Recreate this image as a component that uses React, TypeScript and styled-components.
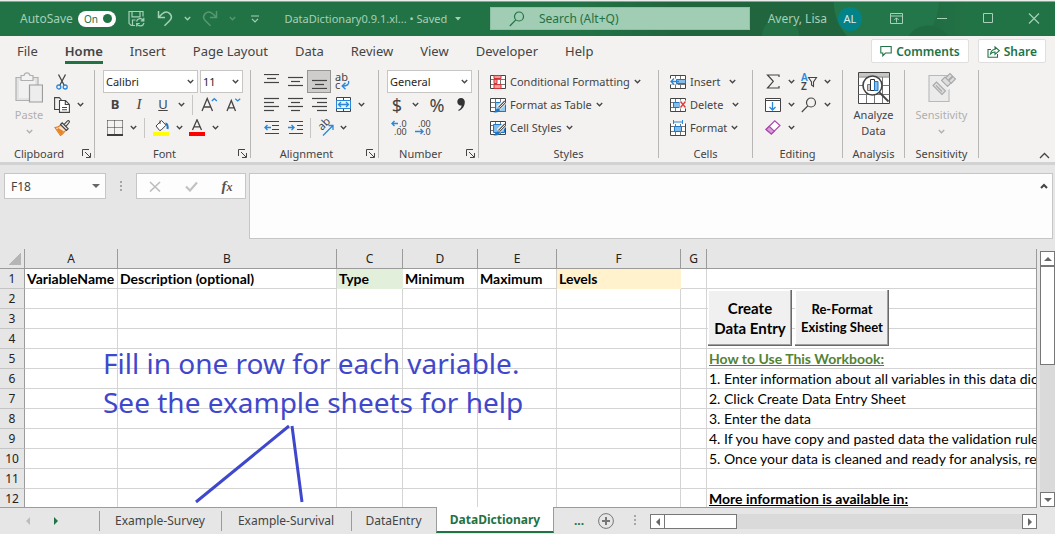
import React from "react";
import styled, { createGlobalStyle, css } from "styled-components";

const UI = `"Noto Sans", "Open Sans", sans-serif`;
const CELL = `Lato, "Open Sans", sans-serif`;
const GREEN = "#217346";
const INK = "#444444";
const BLUE = "#2b88d8";

const GlobalStyle = createGlobalStyle`
  * { box-sizing: border-box; }
  body { margin: 0; background: #e6e6e6; font-family: ${UI}; font-size: 12px; color: ${INK}; }
  button, input, select, textarea { font: inherit; color: inherit; margin: 0; }
`;

const Window = styled.div`
  display: flex;
  flex-direction: column;
  height: 100vh;
  overflow: hidden;
`;

const bare = css`
  border: 0;
  padding: 0;
  background: transparent;
  display: flex;
  align-items: center;
  justify-content: center;
  white-space: nowrap;
`;

/* ---------- title bar ---------- */

const TitleBar = styled.header`
  display: flex;
  align-items: center;
  flex: none;
  height: 36px;
  padding: 0 14px 0 20px;
  border-top: 1px solid #ececec;
  box-shadow: inset 0 1px #9b9b9b;
  background:
    radial-gradient(circle at 88% 140%, #1f6a40 0 24px, transparent 25px),
    radial-gradient(circle at 84% 0, #22764a 0 52px, transparent 53px),
    radial-gradient(circle at 74% 100%, #227245 0 18px, transparent 19px),
    linear-gradient(90deg, ${GREEN} 0 55%, #21653f 64% 84%, ${GREEN} 92%);
  color: #a6d0b7;
`;

const AutoSave = styled.label`
  display: flex;
  align-items: center;
  gap: 5px;
  flex: none;
  white-space: nowrap;
`;

const Pill = styled.span`
  display: flex;
  align-items: center;
  justify-content: space-between;
  flex: none;
  width: 38px;
  height: 16px;
  padding: 0 4px 0 6px;
  border-radius: 8px;
  background: #fff;
  color: ${GREEN};
  font-size: 10px;
`;

const PillDot = styled.input`
  appearance: none;
  width: 9px;
  height: 9px;
  border-radius: 50%;
  background: ${GREEN};
`;

const QuickTools = styled.div`
  display: flex;
  align-items: center;
  flex: none;
  margin-left: 9px;
`;

const QuickButton = styled.button<{ $w: number; $dim?: boolean }>`
  ${bare}
  width: ${(p) => p.$w}px;
  height: 24px;
  opacity: ${(p) => (p.$dim ? 0.4 : 1)};
`;

const DocTitle = styled.button`
  ${bare}
  flex: none;
  gap: 8px;
  min-width: 182px;
  margin: 0 26px 0 10px;
  font-size: 11px;
`;

const SearchBox = styled.label`
  display: flex;
  align-items: center;
  flex: 0 1 260px;
  gap: 14px;
  height: 23px;
  padding-left: 18px;
  border: 1px solid #8cc2a3;
  background: #a0cdb3;
  color: ${GREEN};
`;

const SearchInput = styled.input`
  flex: 1;
  min-width: 0;
  border: 0;
  padding: 0;
  outline: 0;
  background: transparent;
  &::placeholder { color: ${GREEN}; opacity: 1; }
`;

const Account = styled.button`
  ${bare}
  gap: 11px;
  margin-left: auto;
`;

const Avatar = styled.span`
  display: grid;
  place-items: center;
  width: 24px;
  height: 24px;
  border-radius: 50%;
  background: #038387;
  color: #d7eeee;
  font-size: 11px;
`;

const WindowButtons = styled.div`
  display: flex;
  gap: 32px;
  margin-left: 27px;
`;

/* ---------- ribbon tabs ---------- */

const TabRow = styled.nav`
  display: flex;
  align-items: center;
  flex: none;
  height: 30px;
  padding: 0 9px 0 17px;
  background: #f3f2f1;
`;

const TabList = styled.div`
  display: flex;
  gap: 27px;
  flex: 1;
`;

const RibbonTab = styled.button<{ $active?: boolean }>`
  ${bare}
  position: relative;
  height: 30px;
  font-size: 13px;
  ${(p) =>
    p.$active &&
    css`
      font-weight: 600;
      &::after {
        content: "";
        position: absolute;
        left: 0;
        right: 0;
        bottom: 2px;
        height: 3px;
        background: ${GREEN};
      }
    `}
`;

const ActionButton = styled.button`
  ${bare}
  gap: 4px;
  height: 24px;
  margin-left: 9px;
  padding: 0 8px;
  border: 1px solid #e1dfdd;
  border-radius: 2px;
  background: #fff;
  color: ${GREEN};
  font-weight: 600;
  font-size: 12px;
`;

/* ---------- ribbon ---------- */

const Ribbon = styled.section`
  display: flex;
  flex: none;
  height: 99px;
  padding-top: 4px;
  background: #f3f2f1;
  border-bottom: 3px solid #d2d2d2;
  font-size: 11px;
`;

const Group = styled.div<{ $w: number }>`
  display: flex;
  flex-direction: column;
  flex: none;
  width: ${(p) => p.$w}px;
  height: 88px;
  border-right: 1px solid #b9b7b5;
`;

const GroupBody = styled.div`
  display: flex;
  height: 78px;
  padding: 0 8px;
`;

const GroupFooter = styled.div`
  display: flex;
  align-items: center;
  height: 10px;
`;

const GroupName = styled.span<{ $launcher?: boolean }>`
  flex: 1;
  text-align: center;
  padding-right: ${(p) => (p.$launcher ? 4 : 0)}px;
  white-space: nowrap;
`;

const Stack = styled.div`
  display: flex;
  flex-direction: column;
`;

const Row = styled.div`
  display: flex;
  align-items: center;
  height: 23px;
`;

const Tool = styled.button<{ $w?: number; $on?: boolean }>`
  ${bare}
  flex: none;
  width: ${(p) => p.$w ?? 24}px;
  height: 23px;
  ${(p) => p.$on && css`background: #cfcdcb; border: 1px solid #979593;`}
`;

const LauncherButton = styled.button`
  ${bare}
  flex: none;
  width: 9px;
  height: 10px;
  margin-right: 3px;
`;

const Divider = styled.span<{ $w?: number }>`
  width: ${(p) => p.$w ?? 10}px;
  height: 20px;
  background: linear-gradient(#c8c6c4, #c8c6c4) center / 1px 100% no-repeat;
`;

const Command = styled.button`
  ${bare}
  justify-content: flex-start;
  gap: 4px;
  height: 23px;
  padding-left: 3px;
`;

const BigTool = styled.button<{ $dim?: boolean }>`
  ${bare}
  flex-direction: column;
  justify-content: flex-start;
  flex: 1;
  padding-top: 2px;
  line-height: 16px;
  color: ${(p) => (p.$dim ? "#b1afad" : INK)};
`;

const BigIcon = styled.span`
  display: grid;
  place-items: start center;
  height: 35px;
`;

const BigChevron = styled.span`
  display: grid;
  place-items: center;
  height: 16px;
`;

const SelectWrap = styled.label<{ $w: number }>`
  display: flex;
  align-items: center;
  width: ${(p) => p.$w}px;
  height: 23px;
  margin-right: 2px;
  padding-right: 3px;
  border: 1px solid #c8c6c4;
  background: #fff;
`;

const Select = styled.select`
  appearance: none;
  flex: 1;
  min-width: 0;
  height: 21px;
  border: 0;
  padding: 0 0 0 2px;
  outline: 0;
  background: transparent;
  color: #262626;
`;

const Letter = styled.span<{ $size?: number; $bold?: boolean }>`
  font-size: ${(p) => p.$size ?? 13}px;
  font-weight: ${(p) => (p.$bold ? 700 : 400)};
  line-height: 1;
`;

const ItalicLetter = styled(Letter)`
  font-family: "Liberation Serif", serif;
  font-style: italic;
`;

const CollapseSlot = styled.div`
  display: flex;
  flex: 1;
  align-items: flex-end;
  justify-content: flex-end;
  padding-right: 5px;
`;

const CollapseButton = styled.button`
  ${bare}
  width: 12px;
  height: 14px;
`;

/* ---------- formula bar ---------- */

const FormulaRow = styled.section`
  display: flex;
  align-items: flex-start;
  flex: none;
  height: 84px;
  padding: 8px 2px 0 4px;
  background: #e6e6e6;
`;

const NameBox = styled.div`
  display: flex;
  align-items: center;
  width: 102px;
  height: 26px;
  padding: 0 5px 0 6px;
  border: 1px solid #c6c6c6;
  background: #fdfdfd;
`;

const NameInput = styled.input`
  flex: 1;
  min-width: 0;
  border: 0;
  padding: 0;
  outline: 0;
  background: transparent;
`;

const Dots = styled.span`
  display: grid;
  place-items: center;
  width: 30px;
  height: 26px;
`;

const FormulaTools = styled.div`
  display: flex;
  width: 110px;
  height: 26px;
  border: 1px solid #c6c6c6;
  background: #fdfdfd;
`;

const FormulaTool = styled.button`
  ${bare}
  flex: 1;
`;

const FormulaField = styled.div`
  display: flex;
  align-items: flex-start;
  flex: 1;
  height: 66px;
  margin-left: 3px;
  padding: 0 3px;
  border: 1px solid #c6c6c6;
  background: #fdfdfd;
`;

const FormulaInput = styled.textarea`
  flex: 1;
  height: 64px;
  border: 0;
  outline: 0;
  resize: none;
  background: transparent;
`;

/* ---------- worksheet ---------- */

const SheetArea = styled.main`
  display: flex;
  flex: 1;
  min-height: 0;
  gap: 3px;
`;

const Sheet = styled.div`
  position: relative;
  flex: 1;
  min-width: 0;
  overflow: hidden;
  background: #fff;
  border-right: 1px solid #9b9b9b;
`;

const Grid = styled.table`
  width: 100%;
  table-layout: fixed;
  border-collapse: separate;
  border-spacing: 0;
  font-family: ${CELL};
  font-size: 14px;
  font-variant-ligatures: none;
  color: #000;
`;

const ColHead = styled.th`
  height: 20px;
  padding: 0;
  border-right: 1px solid #9b9b9b;
  border-bottom: 1px solid #9b9b9b;
  background: #e6e6e6;
  font: 12px/18px ${UI};
  color: #222;
  &:last-child { border-right: 0; }
`;

const Corner = styled(ColHead)`
  background: linear-gradient(135deg, #e6e6e6 50%, #b5b5b5 50%) 9px 4px / 12px 12px no-repeat, #e6e6e6;
`;

const RowHead = styled.th`
  height: 20px;
  padding: 0;
  border-right: 1px solid #9b9b9b;
  border-bottom: 1px solid #c4c4c4;
  background: #e6e6e6;
  font: 12px/18px ${UI};
  color: #222;
`;

const Cell = styled.td<{ $fill?: string; $bold?: boolean }>`
  height: 20px;
  padding: 0 0 0 2px;
  overflow: hidden;
  white-space: nowrap;
  line-height: 19px;
  border-right: 1px solid ${(p) => p.$fill ?? "#d4d4d4"};
  border-bottom: 1px solid ${(p) => p.$fill ?? "#d4d4d4"};
  background: ${(p) => p.$fill ?? "#fff"};
  font-weight: ${(p) => (p.$bold ? 700 : 400)};
  &:last-child { border-right: 0; }
`;

const Heading = styled.span<{ $color: string }>`
  color: ${(p) => p.$color};
  font-weight: 700;
  text-decoration: underline;
`;

const MacroButton = styled.button<{ $x: number; $w: number; $size: number }>`
  position: absolute;
  left: ${(p) => p.$x}px;
  top: 41px;
  width: ${(p) => p.$w}px;
  height: 56px;
  padding: 0;
  border: 0;
  background: #f0f0f0;
  box-shadow: inset -1px -1px #696969, inset -2px -2px #a0a0a0, inset 1px 1px #fff;
  font-family: ${CELL};
  font-variant-ligatures: none;
  font-weight: 700;
  font-size: ${(p) => p.$size}px;
  line-height: ${(p) => p.$size + 5}px;
  color: #000;
  white-space: pre;
`;

const Note = styled.p`
  position: absolute;
  left: 103px;
  top: 95px;
  margin: 0;
  color: #3f48cc;
  font-size: 28px;
  line-height: 39px;
  white-space: nowrap;
  pointer-events: none;
`;

const NoteLines = styled.svg`
  position: absolute;
  left: 190px;
  top: 174px;
  pointer-events: none;
`;

/* ---------- scroll bars and sheet tabs ---------- */

const VScroll = styled.div`
  display: flex;
  flex-direction: column;
  width: 15px;
  padding-top: 2px;
`;

const ScrollButton = styled.button`
  ${bare}
  flex: none;
  width: 15px;
  height: 15px;
  border: 1px solid #777;
  background: #fff;
`;

const VTrack = styled.div`
  flex: 1;
  background: #dadada;
`;

const VThumb = styled.div`
  height: 99px;
  border: 1px solid #777;
  background: #fff;
`;

const BottomBar = styled.footer`
  display: flex;
  align-items: flex-start;
  flex: none;
  height: 27px;
  padding-right: 18px;
  background: linear-gradient(#9b9b9b, #9b9b9b) 0 0 / calc(100% - 18px) 1px no-repeat, #e6e6e6;
`;

const SheetNav = styled.div`
  display: flex;
  align-items: center;
  gap: 16px;
  width: 99px;
  height: 27px;
  padding-left: 22px;
`;

const NavButton = styled.button`
  ${bare}
  width: 12px;
  height: 16px;
`;

const SheetTab = styled.button<{ $w: number; $active?: boolean }>`
  ${bare}
  width: ${(p) => p.$w}px;
  height: 26px;
  background: linear-gradient(#9b9b9b, #9b9b9b) 0 4px / 1px 20px no-repeat;
  ${(p) =>
    p.$active &&
    css`
      border: 1px solid #9b9b9b;
      border-top: 0;
      border-bottom: 2px solid ${GREEN};
      background: #fff;
      color: ${GREEN};
      font-weight: 700;
    `}
`;

const MoreTabs = styled.button`
  ${bare}
  width: 44px;
  height: 26px;
  padding-left: 6px;
  color: ${GREEN};
  font-weight: 700;
`;

const AddSheet = styled.button`
  ${bare}
  height: 28px;
  margin-right: 6px;
`;

const HScroll = styled.div`
  display: flex;
  flex: 1;
  margin-top: 7px;
`;

const HTrack = styled.div`
  flex: 1;
  height: 15px;
  background: #dadada;
`;

const HThumb = styled.div`
  width: 72px;
  height: 15px;
  border: 1px solid #777;
  border-left: 0;
  background: #fff;
`;

/* ---------- drawings ---------- */

type IconProps = { w?: number; h?: number; children: React.ReactNode; sw?: number };

const Icon = ({ w = 16, h = 16, sw = 1, children }: IconProps) => (
  <svg width={w} height={h} viewBox={`0 0 ${w} ${h}`} fill="none" stroke="currentColor" strokeWidth={sw} aria-hidden="true">
    {children}
  </svg>
);

const TextIcon = styled.svg`
  overflow: visible;
  font-family: ${UI};
  fill: ${INK};
`;

const Chevron = ({ up }: { up?: boolean }) => (
  <Icon w={7} h={5} sw={1.3}>
    <path d={up ? "M.8 4 3.5 1.2 6.2 4" : "M.8 1 3.5 3.8 6.2 1"} />
  </Icon>
);

const Drop = ({ label, w = 12 }: { label: string; w?: number }) => (
  <Tool $w={w} aria-label={label}>
    <Chevron />
  </Tool>
);

const Triangle = ({ dir, color = "#666" }: { dir: "up" | "down" | "left" | "right"; color?: string }) => {
  const d = { up: "M0 6 4 2 8 6z", down: "M0 2 4 6 8 2z", left: "M6 0 2 4 6 8z", right: "M2 0 6 4 2 8z" }[dir];
  return (
    <svg width="8" height="8" viewBox="0 0 8 8" aria-hidden="true">
      <path d={d} fill={color} />
    </svg>
  );
};

const SmallTriangle = ({ color }: { color: string }) => (
  <svg width="6" height="4" viewBox="0 0 6 4" aria-hidden="true">
    <path d="M0 0h6L3 3.500z" fill={color} />
  </svg>
);

const Launcher = () => (
  <LauncherButton aria-label="More settings">
    <Icon w={9} h={9}>
      <path d="M.5 7V.5H7M3 3l5 5M8.500 4v4.500H4" />
    </Icon>
  </LauncherButton>
);

const AlignLines = ({ rows }: { rows: [number, number, number][] }) => (
  <Icon w={15} h={15} sw={1.2}>
    {rows.map(([x, y, w]) => (
      <path key={y} d={`M${x} ${y + 0.5}h${w}`} />
    ))}
  </Icon>
);

const TableGlyph = ({ children }: { children?: React.ReactNode }) => (
  <Icon>
    <path d="M.5 1.500h15v13H.5z" fill="#fff" stroke="#444" />
    <path d="M1 5.500h14M1 10.500h14M5.500 2v12M10.500 2v12" stroke="#777" />
    {children}
  </Icon>
);

const Brush = () => (
  <>
    <path d="M15 4.500 8.500 11" stroke="#f3f2f1" strokeWidth="5" />
    <path d="M15.300 4.500 9 11" stroke="#555" strokeWidth="2.600" />
    <path d="M15 5 9.300 10.700" stroke="#fff" strokeWidth=".9" />
    <path d="M3 15.500c3 0 2-4 5-4 2 0 2.300 2 1 3-1.500 1.200-4 1.200-6 1z" fill="#1f77c4" stroke="none" />
  </>
);

const I = {
  save: (
    <Icon w={17} h={17} sw={1.2}>
      <path d="M7 15.500H3.200L1 13.300V1.500h14v5M4 1.500v5.300h8V1.500M4.500 15v-5h3" />
      <path d="M8.500 11.500a3.800 3.800 0 0 1 7-1M15.800 7.800v3h-3M16 13a3.800 3.800 0 0 1-7 1M8.700 16.500v-3h3" />
    </Icon>
  ),
  undo: (
    <Icon w={16} h={17} sw={1.5}>
      <path d="M1.500 1v6.500H8M1.500 7.500 5 4c2.500-2.300 5.700-2.400 7.800-.4 2 2 1.900 4.800 0 6.800L7.500 15.800" />
    </Icon>
  ),
  redo: (
    <Icon w={16} h={17} sw={1.5}>
      <path d="M14.500 1v6.500H8M14.500 7.500 11 4C8.500 1.700 5.300 1.600 3.200 3.600c-2 2-1.900 4.800 0 6.800l5.300 5.400" />
    </Icon>
  ),
  customise: (
    <Icon w={8} h={8} sw={1.2}>
      <path d="M0 1h8M1 3.800 4 6.800 7 3.800" />
    </Icon>
  ),
  search: (
    <Icon w={16} h={16} sw={1.2}>
      <circle cx="10" cy="5.500" r="4.500" />
      <path d="M6.800 8.800.8 15" />
    </Icon>
  ),
  ribbonMode: (
    <Icon w={13} h={11}>
      <path d="M.5.5h12v10H.5zM.5 3h12M6.500 9.500V5M4.300 7l2.200-2.200L8.700 7" />
    </Icon>
  ),
  minimise: (
    <Icon w={14} h={11}>
      <path d="M2 5.500h10" />
    </Icon>
  ),
  maximise: (
    <Icon w={14} h={11}>
      <path d="M2.500.5h9v9h-9z" />
    </Icon>
  ),
  close: (
    <Icon w={14} h={11} sw={1.200}>
      <path d="m2 .5 10 10M12 .5l-10 10" />
    </Icon>
  ),
  comment: (
    <Icon w={12} h={12} sw={1.1}>
      <path d="M.8 1.500h10.400v6.500H5.500L2.800 10.800V8h-2z" />
    </Icon>
  ),
  share: (
    <Icon w={13} h={13} sw={1.1}>
      <path d="M4 4.500H1v7.800h9.500V9M3.500 9C4 6 5.500 4.500 8 4.500V2l4.300 3.700L8 9.300V7C6 7 4.800 7.600 3.500 9z" />
    </Icon>
  ),
  paste: (
    <Icon w={28} h={32} sw={1.2}>
      <path d="M1 5.500h22v23H1z" fill="#e3e3e3" stroke="#b0b0b0" />
      <path d="M4 8h16v18H4z" fill="#f1f1f1" stroke="none" />
      <path d="M6 8.500v-5h3C9.500 1.500 10.500.8 12 .8s2.500.7 3 2.700h3v5z" fill="#f3f3f3" stroke="#b0b0b0" />
      <path d="M14.500 13h13v17h-13z" fill="#ededed" stroke="#9c9c9c" />
    </Icon>
  ),
  cut: (
    <Icon w={12} h={16} sw={1.300}>
      <path d="M2.500.5 8.300 11.500M9.500.5 3.700 11.500" />
      <circle cx="2.800" cy="13" r="2" stroke={BLUE} />
      <circle cx="9.200" cy="13" r="2" stroke={BLUE} />
    </Icon>
  ),
  copy: (
    <Icon w={16} h={16} sw={1.1}>
      <path d="M5 12.500H.6V.6h4.600l2.200 2.200" />
      <path d="M5.500 3.500h6l3.900 3.900v8H5.500zM11.300 3.500v4h4M8 10.500h5M8 12.800h5" fill="#fff" />
    </Icon>
  ),
  painter: (
    <Icon w={16} h={16} sw={1.1}>
      <path d="M1 7.500c2.500 0 4.500-1 6-2.500l5 5c-1.500 2-3 4-5.500 5.500z" fill="#fbe3cd" stroke="#e07b1f" />
      <path d="M2.500 9.500 7 15l3-3.500L4.500 8z" fill="#e88427" stroke="none" />
      <path d="m6.500 4.500 1.700-1.700 6 6-1.700 1.700zM10 4.600 13.500.9c1-.9 2.500.5 1.600 1.600L12 6.300" fill="#f3f2f1" />
    </Icon>
  ),
  borders: (
    <Icon w={16} h={16}>
      <path d="M.5.500h15M.5 7.500h15M.5.500v13M7.500.5v13M15.500.500v13" strokeDasharray="1 1" stroke="#333" />
      <path d="M0 15h16" stroke="#000" strokeWidth="1.500" />
    </Icon>
  ),
  bucket: (
    <Icon w={16} h={17}>
      <path d="m3 7 5.500-5.500L13 6.200l-5 5-1.500.2z" fill="#fff" />
      <path d="M7 5V1.500" />
      <path d="M12.500 4.500c1.500 0 2.500 2 2 5.500" stroke="#1f77c4" strokeWidth="2" />
      <path d="M0 15h16" stroke="#ff0" strokeWidth="4" />
    </Icon>
  ),
  fontColor: (
    <Icon w={16} h={17} sw={1.3}>
      <path d="M3.500 11 8 .8 12.500 11M5 7.800h6" />
      <path d="M0 15h16" stroke="#f00" strokeWidth="4" />
    </Icon>
  ),
  grow: (
    <Icon w={17} h={16} sw={1.300}>
      <path d="M1 14 6.200 1.500 11.500 14M3 10h6.500" />
      <path d="M10.800 4 13.300 1.700l2.500 2.300" stroke={BLUE} />
    </Icon>
  ),
  shrink: (
    <Icon w={15} h={16} sw={1.300}>
      <path d="M1 14 5.300 3.500 9.500 14M2.500 10.800h5.600" />
      <path d="M9.300 1.800 11.700 4l2.500-2.200" stroke={BLUE} />
    </Icon>
  ),
  wrap: (
    <TextIcon width="16" height="18" viewBox="0 0 16 18" aria-hidden="true">
      <text x="0" y="8" fontSize="11">ab</text>
      <text x="0" y="16" fontSize="11">c</text>
      <path d="M13.500 8c1 3-1 5-6 5M10.500 9.700 7.200 13l3.300 3.200" fill="none" stroke={BLUE} strokeWidth="1.400" />
    </TextIcon>
  ),
  merge: (
    <Icon w={15} h={15}>
      <path d="M.5.500h14v14H.5z" fill="#fff" />
      <path d="M7.500 0v3M7.500 12v3" />
      <path d="M.5 3.500h14v8H.5z" stroke={BLUE} fill="#e8f2fb" />
      <path d="M2.500 7.500h10M5 5 2.500 7.500 5 10M10 5l2.500 2.500L10 10" stroke={BLUE} strokeWidth="1.300" />
    </Icon>
  ),
  outdent: (
    <Icon w={15} h={13}>
      <path d="M1 .5h14M8 4.500h7M8 8.500h7M1 12.500h14" />
      <path d="M7 6.500H1M3.500 4 1 6.500 3.500 9" stroke={BLUE} strokeWidth="1.400" />
    </Icon>
  ),
  indent: (
    <Icon w={15} h={13}>
      <path d="M1 .5h14M9 4.500h6M9 8.500h6M1 12.500h14" />
      <path d="M0 6.500h6M3.500 4 6 6.500 3.500 9" stroke={BLUE} strokeWidth="1.400" />
    </Icon>
  ),
  orient: (
    <TextIcon width="17" height="16" viewBox="0 0 17 16" aria-hidden="true">
      <text transform="translate(5 11) rotate(-45)" fontSize="11">ab</text>
      <path d="M6 15.500 16 5.500M11.500 5.500H16V10" fill="none" stroke={BLUE} strokeWidth="1.300" />
    </TextIcon>
  ),
  moreDecimals: (
    <TextIcon width="17" height="17" viewBox="0 0 17 17" aria-hidden="true">
      <text x="8" y="8" fontSize="9">.0</text>
      <text x="3" y="16" fontSize="9">.00</text>
      <path d="M7 4.500H1M3.500 2 1 4.500 3.500 7" fill="none" stroke={BLUE} strokeWidth="1.400" />
    </TextIcon>
  ),
  fewerDecimals: (
    <TextIcon width="17" height="17" viewBox="0 0 17 17" aria-hidden="true">
      <text x="3" y="8" fontSize="9">.00</text>
      <text x="8" y="16" fontSize="9">.0</text>
      <path d="M0 12.500h8M5.500 10 8 12.500 5.500 15" fill="none" stroke={BLUE} strokeWidth="1.400" />
    </TextIcon>
  ),
  conditional: (
    <TableGlyph>
      <path d="M4 1.500h7v3H4zM4 5.500h3v4H4zM4 10.500h7v4H4z" fill="#f59a9a" stroke="#d13438" />
    </TableGlyph>
  ),
  formatTable: (
    <TableGlyph>
      <path d="M5.500 5.500h10v9h-10z" fill="#9ccbf0" stroke="#1f77c4" />
      <Brush />
    </TableGlyph>
  ),
  cellStyles: (
    <TableGlyph>
      <path d="M3.500 4.500h11v8h-11z" fill="#83bdec" stroke="#1f77c4" />
      <Brush />
    </TableGlyph>
  ),
  insert: (
    <TableGlyph>
      <path d="M0 4.500h8v6H0z" fill="#fff" stroke="none" />
      <path d="M6.500 5.500h9v4h-9z" fill="#83bdec" stroke="#1f77c4" />
      <path d="M9 7.500H1M4 4.500l-3 3 3 3" stroke={BLUE} strokeWidth="1.400" />
    </TableGlyph>
  ),
  remove: (
    <TableGlyph>
      <path d="M3.500 5.500h6v5h-6z" fill="#83bdec" stroke="#1f77c4" />
      <path d="M9.500 3.500H16v8H9.500z" fill="#f3f2f1" stroke="none" />
      <path d="m10.500 4.500 5 6M15.500 4.500l-5 6" stroke="#e03b3b" strokeWidth="1.400" />
    </TableGlyph>
  ),
  format: (
    <Icon w={16} h={16}>
      <path d="M.5 3.500v12h15v-12" fill="#fff" />
      <path d="M1 6.500h14M1 11.500h14M5.500 4v11M10.500 4v11" stroke="#777" />
      <path d="M4.500 6.500h7v5h-7z" fill="#83bdec" stroke="#1f77c4" />
      <path d="M3.500 0v4M12.500 0v4M4 2h8" stroke={BLUE} />
    </Icon>
  ),
  sum: (
    <Icon w={14} h={15} sw={1.2}>
      <path d="M13 3V1H1.500l5.800 6.300L1.500 14H13v-2" />
    </Icon>
  ),
  fill: (
    <Icon w={16} h={14}>
      <path d="M.5.500h15v13H.5z" fill="#fff" />
      <path d="M.5 2.500h15" />
      <path d="M7.500 4v8M4.500 9l3 3 3-3" stroke={BLUE} strokeWidth="1.300" />
    </Icon>
  ),
  eraser: (
    <Icon w={16} h={15} sw={1.100}>
      <path d="M1 9.500 9.800.8 15 5.500 6.300 14z" fill="#fff" stroke="#a846a8" />
      <path d="M1 9.500 4.200 6.300l5.200 4.900L6.300 14z" fill="#d99bdc" stroke="#a846a8" />
    </Icon>
  ),
  sort: (
    <TextIcon width="16" height="17" viewBox="0 0 16 17" aria-hidden="true">
      <text x="0" y="8" fontSize="10" fontWeight="600" fill={BLUE}>A</text>
      <text x="0" y="17" fontSize="10" fontWeight="600">Z</text>
      <path d="M7.500 4.500h8L12.500 9v4.500l-2-1.500V9z" fill="none" stroke={INK} strokeWidth="1.100" />
    </TextIcon>
  ),
  analyze: (
    <Icon w={32} h={32}>
      <path d="M.5.500h31v31H.5z" fill="#fff" stroke="#444" />
      <path d="M1 1h30v3.500H1z" fill="#c8c6c4" stroke="none" />
      <path d="M.5 5h31M.5 13.500h31M.5 22.500h31M8.500 5v26M16.500 5v26M24.500 5v26" stroke="#777" />
      <circle cx="14.500" cy="13.500" r="9.500" fill="#fff" stroke="#444" strokeWidth="1.600" />
      <path d="M9.500 12.500h3v6h-3z" fill="#c8c6c4" stroke="#777" />
      <path d="M12.500 7.500h4v11h-4z" fill="#fff" stroke="#333" />
      <path d="M16.500 9.500h3.500v9h-3.500z" fill="#83bdec" stroke="#1f77c4" />
      <path d="m21.500 20.500 9 9" stroke="#444" strokeWidth="1.800" />
    </Icon>
  ),
  sensitivity: (
    <Icon w={28} h={32} sw={1.1}>
      <path d="M1 3.500h20v26H1z" fill="#ebebeb" stroke="#b9b9b9" />
      <path d="m5 13.500 3.500-3.500 9 9-3.500 3.500z" fill="#ddd" stroke="#a9a9a9" />
      <path d="m8 13.500 6 6" stroke="#a9a9a9" />
      <path d="M13 7.500 22 16.500" stroke="#f3f2f1" strokeWidth="4" />
      <path d="m13.500 8.500 3.500-3.500 6 6-3.500 3.500zM17.500 6l4.500-4.500 2.500 2.500L20 8.500M20.500 9l4.500-4.500 2.500 2.500L23 11.500" fill="#ddd" stroke="#a9a9a9" />
    </Icon>
  ),
  cancel: (
    <Icon w={12} h={11} sw={1.600}>
      <path d="m1 1 10 9.500M11 1 1 10.500" stroke="#bdbdbd" />
    </Icon>
  ),
  accept: (
    <Icon w={13} h={11} sw={2.200}>
      <path d="m1 5.500 4 4 7-8" stroke="#c2c2c2" />
    </Icon>
  ),
  threeDots: (
    <svg width="2" height="12" viewBox="0 0 2 12" aria-hidden="true">
      <path d="M0 1h2v2H0zM0 5h2v2H0zM0 9h2v2H0z" fill="#a6a6a6" />
    </svg>
  ),
  add: (
    <Icon w={16} h={16}>
      <circle cx="8" cy="8" r="7.400" stroke="#777" />
      <path d="M4 8h8M8 4v8" stroke="#777" strokeWidth="2" />
    </Icon>
  ),
};

const FunctionGlyph = styled.span`
  font: italic 700 15px/1 "Liberation Serif", serif;
  color: #555;
  small { font-size: 12px; }
`;

/* ---------- data ---------- */

const ribbonTabs = ["File", "Home", "Insert", "Page Layout", "Data", "Review", "View", "Developer", "Help"];

const columns: { name: string; width?: number }[] = [
  { name: "A", width: 93 },
  { name: "B", width: 219 },
  { name: "C", width: 66 },
  { name: "D", width: 75 },
  { name: "E", width: 79 },
  { name: "F", width: 124 },
  { name: "G", width: 26 },
  { name: "" },
];

const headings = ["VariableName", "Description (optional)", "Type", "Minimum", "Maximum", "Levels", "", ""];
const fills: Record<number, string> = { 2: "#e2efda", 5: "#fff2cc" };

const instructions: Record<number, React.ReactNode> = {
  5: <Heading $color="#548235">How to Use This Workbook:</Heading>,
  6: "1. Enter information about all variables in this data dictionary",
  7: "2. Click Create Data Entry Sheet",
  8: "3. Enter the data",
  9: "4. If you have copy and pasted data the validation rules",
  10: "5. Once your data is cleaned and ready for analysis, re",
  12: <Heading $color="#000">More information is available in:</Heading>,
};

const sheetTabs = [
  { name: "Example-Survey", width: 122 },
  { name: "Example-Survival", width: 130 },
  { name: "DataEntry", width: 85 },
  { name: "DataDictionary", width: 118 },
];

const Footer = ({ name, launcher }: { name: string; launcher?: boolean }) => (
  <GroupFooter>
    <GroupName $launcher={launcher}>{name}</GroupName>
    {launcher && <Launcher />}
  </GroupFooter>
);

const PickList = ({ label, value, w }: { label: string; value: string; w: number }) => (
  <SelectWrap $w={w}>
    <Select aria-label={label} defaultValue={value}>
      <option>{value}</option>
    </Select>
    <Chevron />
  </SelectWrap>
);

export default function App() {
  return (
    <Window>
      <GlobalStyle />
      <TitleBar>
        <AutoSave>
          AutoSave
          <Pill>
            On
            <PillDot type="checkbox" role="switch" defaultChecked />
          </Pill>
        </AutoSave>
        <QuickTools>
          <QuickButton $w={24} aria-label="Save">{I.save}</QuickButton>
          <QuickButton $w={33} aria-label="Undo">{I.undo}</QuickButton>
          <QuickButton $w={12} aria-label="Undo history"><Chevron /></QuickButton>
          <QuickButton $w={33} $dim aria-label="Redo">{I.redo}</QuickButton>
          <QuickButton $w={12} $dim aria-label="Redo history"><Chevron /></QuickButton>
          <QuickButton $w={33} aria-label="Customise toolbar">{I.customise}</QuickButton>
        </QuickTools>
        <DocTitle>
          DataDictionary0.9.1.xl... • Saved <SmallTriangle color="#a6d0b7" />
        </DocTitle>
        <SearchBox>
          {I.search}
          <SearchInput type="text" placeholder="Search (Alt+Q)" aria-label="Search" />
        </SearchBox>
        <Account>
          Avery, Lisa <Avatar>AL</Avatar>
        </Account>
        <WindowButtons>
          <QuickButton $w={14} aria-label="Ribbon display">{I.ribbonMode}</QuickButton>
          <QuickButton $w={14} aria-label="Minimise">{I.minimise}</QuickButton>
          <QuickButton $w={14} aria-label="Maximise">{I.maximise}</QuickButton>
          <QuickButton $w={14} aria-label="Close">{I.close}</QuickButton>
        </WindowButtons>
      </TitleBar>

      <TabRow>
        <TabList>
          {ribbonTabs.map((t) => (
            <RibbonTab key={t} $active={t === "Home"}>{t}</RibbonTab>
          ))}
        </TabList>
        <ActionButton>{I.comment}Comments</ActionButton>
        <ActionButton>{I.share}Share</ActionButton>
      </TabRow>

      <Ribbon>
        <Group $w={95}>
          <GroupBody>
            <BigTool $dim>
              <BigIcon>{I.paste}</BigIcon>
              Paste
              <BigChevron><Chevron /></BigChevron>
            </BigTool>
            <Stack>
              <Row><Tool aria-label="Cut">{I.cut}</Tool></Row>
              <Row><Tool aria-label="Copy">{I.copy}</Tool><Drop label="Copy options" /></Row>
              <Row><Tool aria-label="Format painter">{I.painter}</Tool></Row>
            </Stack>
          </GroupBody>
          <Footer name="Clipboard" launcher />
        </Group>

        <Group $w={156}>
          <GroupBody>
            <Stack>
              <Row>
                <PickList label="Font" value="Calibri" w={95} />
                <PickList label="Font size" value="11" w={43} />
              </Row>
              <Row>
                <Tool><Letter $bold>B</Letter></Tool>
                <Tool><ItalicLetter $size={15}>I</ItalicLetter></Tool>
                <Tool><Letter as="u">U</Letter></Tool>
                <Drop label="Underline options" />
                <Divider />
                <Tool aria-label="Increase font size">{I.grow}</Tool>
                <Tool aria-label="Decrease font size">{I.shrink}</Tool>
              </Row>
              <Row>
                <Tool aria-label="Borders">{I.borders}</Tool>
                <Drop label="Border options" />
                <Divider />
                <Tool aria-label="Fill colour">{I.bucket}</Tool>
                <Drop label="Fill options" />
                <Tool aria-label="Font colour">{I.fontColor}</Tool>
                <Drop label="Font colour options" />
              </Row>
            </Stack>
          </GroupBody>
          <Footer name="Font" launcher />
        </Group>

        <Group $w={128}>
          <GroupBody>
            <Stack>
              <Row>
                <Tool aria-label="Top align"><AlignLines rows={[[0, 0, 15], [3, 4, 9], [0, 8, 15]]} /></Tool>
                <Tool aria-label="Middle align"><AlignLines rows={[[0, 3, 15], [3, 7, 9], [0, 11, 15]]} /></Tool>
                <Tool $on aria-label="Bottom align"><AlignLines rows={[[0, 6, 15], [3, 10, 9], [0, 14, 15]]} /></Tool>
                <Tool aria-label="Wrap text">{I.wrap}</Tool>
              </Row>
              <Row>
                <Tool aria-label="Align left"><AlignLines rows={[[0, 1, 15], [0, 5, 10], [0, 9, 15], [0, 13, 10]]} /></Tool>
                <Tool aria-label="Centre"><AlignLines rows={[[0, 1, 15], [3, 5, 9], [0, 9, 15], [3, 13, 9]]} /></Tool>
                <Tool aria-label="Align right"><AlignLines rows={[[0, 1, 15], [5, 5, 10], [0, 9, 15], [5, 13, 10]]} /></Tool>
                <Tool aria-label="Merge cells">{I.merge}</Tool>
                <Drop label="Merge options" />
              </Row>
              <Row>
                <Tool aria-label="Decrease indent">{I.outdent}</Tool>
                <Tool aria-label="Increase indent">{I.indent}</Tool>
                <Divider $w={6} />
                <Tool aria-label="Orientation">{I.orient}</Tool>
                <Drop label="Orientation options" />
              </Row>
            </Stack>
          </GroupBody>
          <Footer name="Alignment" launcher />
        </Group>

        <Group $w={100}>
          <GroupBody>
            <Stack>
              <Row><PickList label="Number format" value="General" w={85} /></Row>
              <Row>
                <Tool $w={20}><Letter $size={18}>$</Letter></Tool>
                <Drop label="Currency options" w={16} />
                <Tool $w={28}><Letter $size={18}>%</Letter></Tool>
                <Tool $w={20} aria-label="Comma style">
                  <Icon w={8} h={13}>
                    <path d="M4 0a3.700 3.700 0 0 1 3.800 4c0 4-2.500 7.500-6 9l-.6-1C3 11 4.500 9.500 4.600 7.400 2 8 .3 6 .3 3.800.3 1.600 2 0 4 0z" fill="#333" stroke="none" />
                  </Icon>
                </Tool>
              </Row>
              <Row>
                <Tool aria-label="Increase decimal">{I.moreDecimals}</Tool>
                <Tool aria-label="Decrease decimal">{I.fewerDecimals}</Tool>
              </Row>
            </Stack>
          </GroupBody>
          <Footer name="Number" launcher />
        </Group>

        <Group $w={180}>
          <GroupBody>
            <Stack>
              <Command>{I.conditional}Conditional Formatting <Chevron /></Command>
              <Command>{I.formatTable}Format as Table <Chevron /></Command>
              <Command>{I.cellStyles}Cell Styles <Chevron /></Command>
            </Stack>
          </GroupBody>
          <Footer name="Styles" />
        </Group>

        <Group $w={94}>
          <GroupBody>
            <Stack>
              <Row><Command>{I.insert}Insert</Command><Drop label="Insert options" w={24} /></Row>
              <Row><Command>{I.remove}Delete</Command><Drop label="Delete options" w={24} /></Row>
              <Row><Command>{I.format}Format <Chevron /></Command></Row>
            </Stack>
          </GroupBody>
          <Footer name="Cells" />
        </Group>

        <Group $w={90}>
          <GroupBody>
            <Stack>
              <Row>
                <Tool aria-label="Sum">{I.sum}</Tool><Drop label="Sum options" />
                <Tool aria-label="Sort and filter">{I.sort}</Tool><Drop label="Sort options" />
              </Row>
              <Row>
                <Tool aria-label="Fill">{I.fill}</Tool><Drop label="Fill direction" />
                <Tool aria-label="Find">{I.search}</Tool><Drop label="Find options" />
              </Row>
              <Row>
                <Tool aria-label="Clear">{I.eraser}</Tool><Drop label="Clear options" />
              </Row>
            </Stack>
          </GroupBody>
          <Footer name="Editing" />
        </Group>

        <Group $w={62}>
          <GroupBody>
            <BigTool>
              <BigIcon>{I.analyze}</BigIcon>
              <span>Analyze</span>
              <span>Data</span>
            </BigTool>
          </GroupBody>
          <Footer name="Analysis" />
        </Group>

        <Group $w={74}>
          <GroupBody>
            <BigTool $dim>
              <BigIcon>{I.sensitivity}</BigIcon>
              Sensitivity
              <BigChevron><Chevron /></BigChevron>
            </BigTool>
          </GroupBody>
          <Footer name="Sensitivity" />
        </Group>

        <CollapseSlot>
          <CollapseButton aria-label="Collapse ribbon">
            <Icon w={11} h={7} sw={1.3}><path d="M1 6 5.500 1.500 10 6" /></Icon>
          </CollapseButton>
        </CollapseSlot>
      </Ribbon>

      <FormulaRow>
        <NameBox>
          <NameInput type="text" aria-label="Name box" defaultValue="F18" />
          <Triangle dir="down" />
        </NameBox>
        <Dots>{I.threeDots}</Dots>
        <FormulaTools>
          <FormulaTool aria-label="Cancel">{I.cancel}</FormulaTool>
          <FormulaTool aria-label="Enter">{I.accept}</FormulaTool>
          <FormulaTool aria-label="Insert function"><FunctionGlyph>f<small>x</small></FunctionGlyph></FormulaTool>
        </FormulaTools>
        <FormulaField>
          <FormulaInput aria-label="Formula" />
          <Tool $w={10} aria-label="Collapse formula bar"><Icon w={8} h={6} sw={2}><path d="M1 5 4 2 7 5" /></Icon></Tool>
        </FormulaField>
      </FormulaRow>

      <SheetArea>
        <Sheet>
          <Grid>
            <colgroup>
              <col width={25} />
              {columns.map((c, i) => <col key={i} width={c.width} />)}
            </colgroup>
            <thead>
              <tr>
                <Corner aria-label="Select all" />
                {columns.map((c, i) => <ColHead key={i} scope="col">{c.name}</ColHead>)}
              </tr>
            </thead>
            <tbody>
              {Array.from({ length: 12 }, (_, r) => r + 1).map((r) => (
                <tr key={r}>
                  <RowHead scope="row">{r}</RowHead>
                  {columns.map((_, c) => (
                    <Cell key={c} $fill={r === 1 ? fills[c] : undefined} $bold={r === 1}>
                      {r === 1 ? headings[c] : c === 7 ? instructions[r] : null}
                    </Cell>
                  ))}
                </tr>
              ))}
            </tbody>
          </Grid>
          <MacroButton $x={708} $w={84} $size={15}>{"Create\nData Entry"}</MacroButton>
          <MacroButton $x={795} $w={94} $size={13}>{"Re-Format\nExisting Sheet"}</MacroButton>
          <Note>
            Fill in one row for each variable.
            <br />
            See the example sheets for help
          </Note>
          <NoteLines width="120" height="84" viewBox="0 0 120 84" fill="none" stroke="#3f48cc" strokeWidth="3">
            <path d="M99 3 6 79M102 3l10 76" />
          </NoteLines>
        </Sheet>
        <VScroll>
          <ScrollButton aria-label="Scroll up"><Triangle dir="up" /></ScrollButton>
          <VTrack><VThumb /></VTrack>
          <ScrollButton aria-label="Scroll down"><Triangle dir="down" /></ScrollButton>
        </VScroll>
      </SheetArea>

      <BottomBar>
        <SheetNav>
          <NavButton aria-label="Previous sheet"><Triangle dir="left" color="#bdbdbd" /></NavButton>
          <NavButton aria-label="Next sheet"><Triangle dir="right" color={GREEN} /></NavButton>
        </SheetNav>
        {sheetTabs.map((t) => (
          <SheetTab key={t.name} $w={t.width} $active={t.name === "DataDictionary"}>{t.name}</SheetTab>
        ))}
        <MoreTabs aria-label="More sheets">...</MoreTabs>
        <AddSheet aria-label="New sheet">{I.add}</AddSheet>
        <Dots>{I.threeDots}</Dots>
        <HScroll>
          <ScrollButton aria-label="Scroll left"><Triangle dir="left" /></ScrollButton>
          <HTrack><HThumb /></HTrack>
          <ScrollButton aria-label="Scroll right"><Triangle dir="right" /></ScrollButton>
        </HScroll>
      </BottomBar>
    </Window>
  );
}
